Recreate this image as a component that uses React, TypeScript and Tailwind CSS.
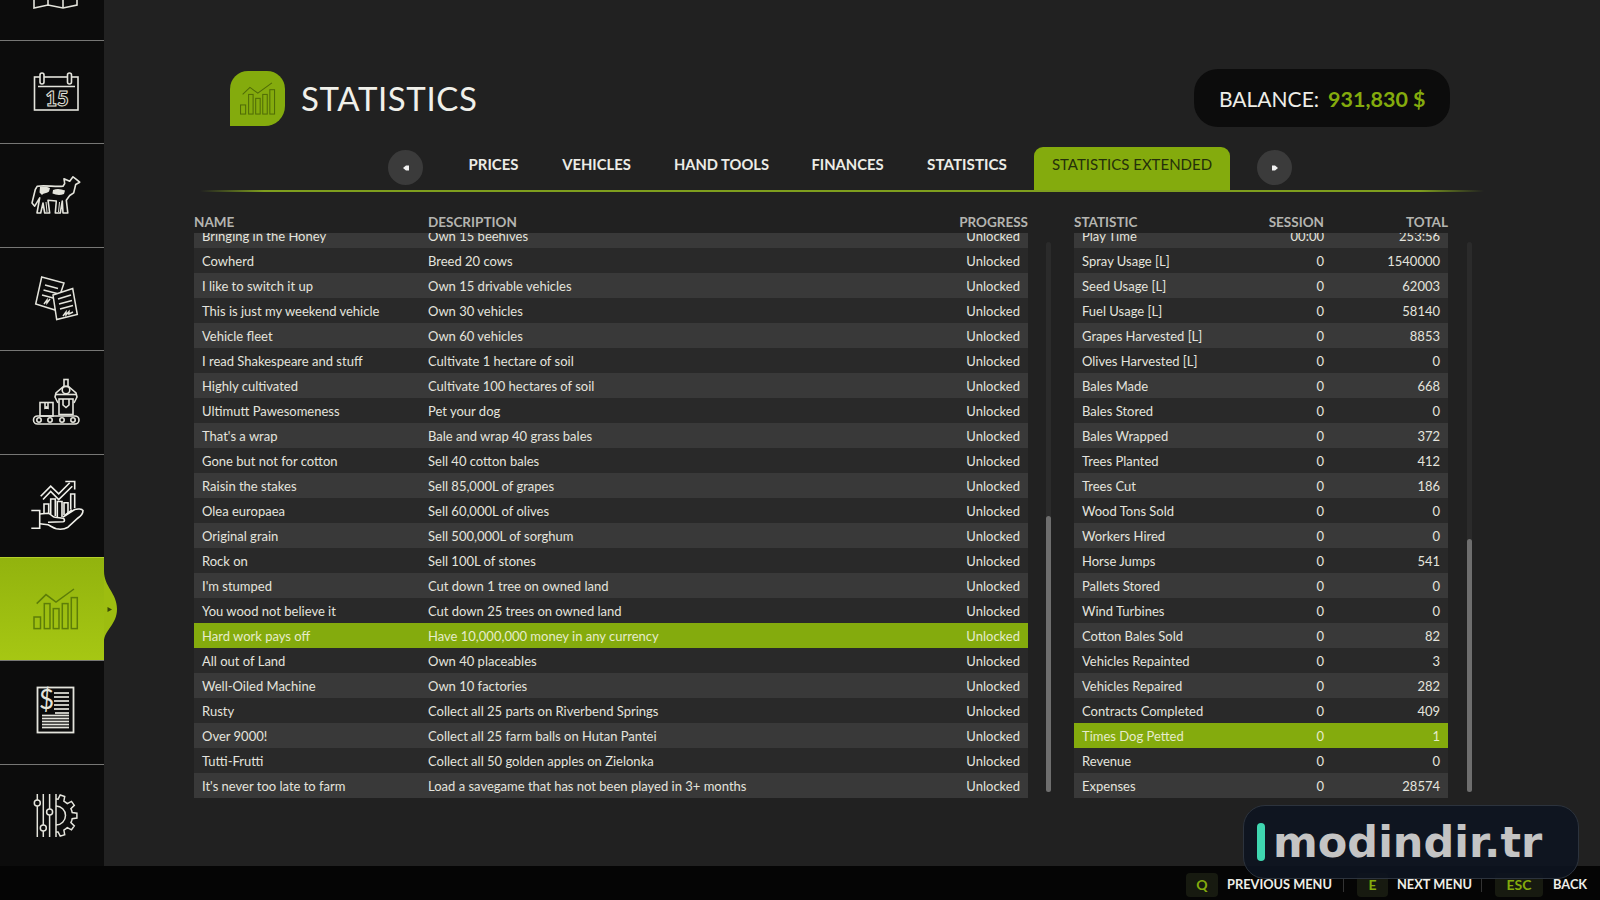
import React from 'react';

const font = { fontFamily: '"Lato", "Open Sans", sans-serif' };

const achievements = [
  ['Bringing in the Honey', 'Own 15 beehives'],
  ['Cowherd', 'Breed 20 cows'],
  ['I like to switch it up', 'Own 15 drivable vehicles'],
  ['This is just my weekend vehicle', 'Own 30 vehicles'],
  ['Vehicle fleet', 'Own 60 vehicles'],
  ['I read Shakespeare and stuff', 'Cultivate 1 hectare of soil'],
  ['Highly cultivated', 'Cultivate 100 hectares of soil'],
  ['Ultimutt Pawesomeness', 'Pet your dog'],
  ["That's a wrap", 'Bale and wrap 40 grass bales'],
  ['Gone but not for cotton', 'Sell 40 cotton bales'],
  ['Raisin the stakes', 'Sell 85,000L of grapes'],
  ['Olea europaea', 'Sell 60,000L of olives'],
  ['Original grain', 'Sell 500,000L of sorghum'],
  ['Rock on', 'Sell 100L of stones'],
  ["I'm stumped", 'Cut down 1 tree on owned land'],
  ['You wood not believe it', 'Cut down 25 trees on owned land'],
  ['Hard work pays off', 'Have 10,000,000 money in any currency'],
  ['All out of Land', 'Own 40 placeables'],
  ['Well-Oiled Machine', 'Own 10 factories'],
  ['Rusty', 'Collect all 25 parts on Riverbend Springs'],
  ['Over 9000!', 'Collect all 25 farm balls on Hutan Pantei'],
  ['Tutti-Frutti', 'Collect all 50 golden apples on Zielonka'],
  ["It's never too late to farm", 'Load a savegame that has not been played in 3+ months'],
];

const stats = [
  ['Play Time', '00:00', '253:56'],
  ['Spray Usage [L]', '0', '1540000'],
  ['Seed Usage [L]', '0', '62003'],
  ['Fuel Usage [L]', '0', '58140'],
  ['Grapes Harvested [L]', '0', '8853'],
  ['Olives Harvested [L]', '0', '0'],
  ['Bales Made', '0', '668'],
  ['Bales Stored', '0', '0'],
  ['Bales Wrapped', '0', '372'],
  ['Trees Planted', '0', '412'],
  ['Trees Cut', '0', '186'],
  ['Wood Tons Sold', '0', '0'],
  ['Workers Hired', '0', '0'],
  ['Horse Jumps', '0', '541'],
  ['Pallets Stored', '0', '0'],
  ['Wind Turbines', '0', '0'],
  ['Cotton Bales Sold', '0', '82'],
  ['Vehicles Repainted', '0', '3'],
  ['Vehicles Repaired', '0', '282'],
  ['Contracts Completed', '0', '409'],
  ['Times Dog Petted', '0', '1'],
  ['Revenue', '0', '0'],
  ['Expenses', '0', '28574'],
];

const ink = '#e4e4dc';

const gearPoints = () => {
  const pts: string[] = [];
  const teeth = 5;
  for (let i = 0; i < teeth; i++) {
    const step = 180 / teeth;
    const a0 = -90 + i * step;
    [[0.0, 16.5], [0.2, 16.5], [0.32, 21], [0.68, 21], [0.8, 16.5], [1.0, 16.5]].forEach(([f, r]) => {
      const a = ((a0 + f * step) * Math.PI) / 180;
      pts.push(`${(56 + r * Math.cos(a)).toFixed(1)},${(51.6 + r * Math.sin(a)).toFixed(1)}`);
    });
  }
  return pts.join(' ');
};

const ChartBars = ({ color, width }: { color: string; width: number }) => (
  <g fill="none" stroke={color} strokeWidth={width}>
    <rect x="34" y="60" width="6.5" height="11.6" />
    <rect x="44.3" y="46.6" width="5.7" height="25" />
    <rect x="53.3" y="51.6" width="5.7" height="20" />
    <rect x="62.3" y="46.6" width="5.7" height="25" />
    <rect x="71.3" y="40.6" width="6" height="31" />
    <polyline points="36.7,46.6 46,37.6 56,45 74,32" />
  </g>
);

const CalendarIcon = () => (
  <g fill="none" stroke={ink} strokeWidth="1.6">
    <rect x="34.5" y="37" width="43.5" height="33" />
    <line x1="38" y1="46.5" x2="75" y2="46.5" />
    <rect x="40" y="33" width="4" height="11" rx="2" fill="#0c0c0c" />
    <rect x="67.5" y="33" width="4" height="11" rx="2" fill="#0c0c0c" />
    <text x="57" y="66" textAnchor="middle" fontSize="20" fontWeight="900" fill="none" strokeWidth="1" style={font}>15</text>
  </g>
);

const CowIcon = () => (
  <g stroke={ink} strokeWidth="1.6" strokeLinejoin="round">
    <path fill="#0c0c0c" d="M37.3 43.2 C45 42 55 44 63 43.2 L64.7 40.5 L64 35.8 L69.7 38.2 L73 33.8 L75.7 35.8 L79.7 39.2 L75.7 41.5 L73.7 49.8 L69.7 52.5 L66.3 57.2 L67.8 70 L63 70 L62.3 58 L60.3 70 L55.3 70 L56.3 58 L48 57.2 L49.7 70 L44.7 70 L43 60 L40.7 70 L37 70 L39.7 54.8 L34.7 63.2 L32 60 L35.3 46.5 Z" />
    <path fill={ink} stroke="none" d="M40 44 C44 43.2 47.5 43.8 50 45 L49 48.5 C46 51 44 49.5 42 52 L39.5 49.5 Z" />
    <path fill={ink} stroke="none" d="M53 47 C57 45.5 61 46 65 47.5 L64 51 C60 52.5 56 52 52.5 50.5 Z" />
    <line x1="59.5" y1="59" x2="58.5" y2="69" strokeWidth="1" />
    <line x1="46" y1="59" x2="47" y2="69" strokeWidth="1" />
  </g>
);

const DocsIcon = () => (
  <g fill="#0c0c0c" stroke={ink} strokeWidth="1.5">
    <polygon points="41.7,30 64,36 55,63 35.7,57" />
    <line x1="45" y1="38" x2="58" y2="41.5" />
    <line x1="43.5" y1="43" x2="57" y2="46.5" />
    <line x1="42" y1="48" x2="55" y2="51.5" />
    <polygon points="53,48 72.7,41.5 77.3,67.5 56.7,72.6" />
    <line x1="58" y1="52" x2="71" y2="48" />
    <line x1="59" y1="57" x2="72" y2="53.5" />
    <line x1="60" y1="62" x2="73" y2="58.5" />
    <path fill="none" d="M63 69 L66 65 L66 68 L69 64.5 L69 67 L73 65" />
    <path fill="none" d="M44 57 L47 53 L47 56 L50 52" />
  </g>
);

const FactoryIcon = () => (
  <g fill="none" stroke={ink} strokeWidth="1.6">
    <rect x="33.5" y="66" width="45.5" height="8" rx="4" />
    {[39, 50, 62, 73].map(x => <circle key={x} cx={x} cy="70" r="2.2" />)}
    <rect x="40" y="52.5" width="13" height="13.5" />
    <polyline points="45,52.5 45,58 46.5,57 48,58 48,52.5" />
    <rect x="59" y="49" width="14" height="15.5" />
    <path d="M63 49 L63 55 L66 57.5 L69 55 L69 49" />
    <rect x="64" y="29.5" width="4" height="7" />
    <circle cx="66" cy="40" r="3.8" />
    <polyline points="64,36 56,43 55,47 58,53" />
    <polyline points="68,36 76,43 77,47 74,53" />
    <line x1="56" y1="44.5" x2="76" y2="44.5" />
  </g>
);

const HandIcon = () => (
  <g fill="none" stroke="#f0f0ea" strokeWidth="1.6" strokeLinejoin="miter">
    <polyline points="31.3,56.5 39.7,56.5 39.7,74.2 31.3,74.2" />
    <polyline points="40.7,42.2 50.7,32.2 58.7,39.8 69.7,28.8" />
    <polyline points="43,45.5 50.7,37.5 58.7,45.5 72.3,32.2" />
    <polyline points="65.3,27.5 74.7,27.5 74.7,35.5" />
    <polyline points="44,59 44,50 48.7,50 48.7,59.5" />
    <polyline points="50.7,60.5 50.7,45 55.3,45 55.3,62" />
    <polyline points="57.3,63 57.3,47.5 62,47.5 62,63" />
    <polyline points="64,61 64,48.8 68,48.8 68,59" />
    <polyline points="70.7,55.5 70.7,40 74.7,40 74.7,54" />
    <path d="M39.7 60 L48 59.2 C51 59.5 52 63.2 55 63.2 L63 64.2 C65 65 65 67.5 63 67.7 L48 68.2" />
    <path d="M63 63 L74.7 55.5 C78 54.5 82 55 83 56.5 C83 59 81 62 78 64 L68 73.2 C64 75.5 60 75.5 56.3 74.8 C53 74 50 71.5 48 70.8 L39.7 69.8" />
    <line x1="65.3" y1="60.8" x2="72" y2="56" />
  </g>
);

const ReportIcon = () => (
  <g stroke={ink} fill="none">
    <rect x="37.5" y="27.5" width="36" height="45" strokeWidth="1.8" />
    <text x="46.5" y="49" textAnchor="middle" fontSize="26" fill={ink} stroke="none" style={font}>$</text>
    {[33, 37, 41, 45, 49, 53].map(y => <line key={y} x1={y === 53 ? 55 : 54} y1={y} x2="69" y2={y} strokeWidth="1.7" />)}
    {[55.5, 58.5, 61.5, 64.5, 67.5].map(y => <line key={y} x1="42" y1={y} x2="69" y2={y} strokeWidth="1.7" />)}
  </g>
);

const SlidersIcon = () => (
  <g fill="none" stroke={ink} strokeWidth="1.5">
    <line x1="37.3" y1="30" x2="37.3" y2="73" />
    <line x1="43.3" y1="30" x2="43.3" y2="73" />
    <line x1="49.6" y1="30" x2="49.6" y2="73" />
    <circle cx="37.3" cy="39" r="3" fill="#0c0c0c" />
    <circle cx="43.3" cy="64" r="3" fill="#0c0c0c" />
    <circle cx="49.6" cy="48" r="3" fill="#0c0c0c" />
    <polyline points={gearPoints()} />
    <line x1="56" y1="30" x2="56" y2="73" />
    <path d="M56 42 A9.5 9.5 0 0 1 56 61" />
  </g>
);

const NavRow = ({ children, active }: { children: React.ReactNode; active?: boolean }) => (
  <div className={active
    ? 'relative h-[103.4px] bg-gradient-to-b from-[#92b30e] to-[#a6c713] border-t border-[#b5d02a]'
    : 'h-[103.4px] border-t border-[#777775]'}>
    <svg className="block w-[104px] h-[103px] -mt-px" viewBox="0 0 104 103">{children}</svg>
    {active && (
      <svg className="absolute left-[104px] top-0 w-[14px] h-[103px]" viewBox="0 0 14 103">
        <path d="M0 13 C0 29 13 35 13 51 C13 67 0 72 0 84 Z" fill="#9dbd10" />
        <path d="M3.5 49 L8 51.5 L3.5 54 Z" fill="#3a4a06" />
      </svg>
    )}
  </div>
);

const Sidebar = () => (
  <div className="w-[104px] h-[866px] shrink-0 bg-[#0c0c0c] relative">
    <div className="h-[40px] overflow-hidden">
      <svg className="block w-[104px] h-[40px]" viewBox="0 0 104 40">
        <polyline points="34,-3 34,8 48,5 63,8 77,5 77,-3" fill="none" stroke={ink} strokeWidth="1.6" />
        <line x1="48" y1="-3" x2="48" y2="5" stroke={ink} strokeWidth="1.6" />
        <line x1="63" y1="-3" x2="63" y2="8" stroke={ink} strokeWidth="1.6" />
      </svg>
    </div>
    <NavRow><CalendarIcon /></NavRow>
    <NavRow><CowIcon /></NavRow>
    <NavRow><DocsIcon /></NavRow>
    <NavRow><FactoryIcon /></NavRow>
    <NavRow><HandIcon /></NavRow>
    <NavRow active><ChartBars color="#5d7d08" width={1.5} /></NavRow>
    <NavRow><ReportIcon /></NavRow>
    <NavRow><SlidersIcon /></NavRow>
  </div>
);

const ArrowButton = ({ dir }: { dir: 'left' | 'right' }) => (
  <button className="w-[35px] h-[35px] mt-[3px] shrink-0 rounded-full bg-[#3b3b3b] flex items-center justify-center">
    <svg width="6" height="6" viewBox="0 0 6 6">
      <path d={dir === 'left' ? 'M0 3 L3 0.5 L6 0.5 L6 5.5 L3 5.5 Z' : 'M6 3 L3 0.5 L0 0.5 L0 5.5 L3 5.5 Z'} fill="#f2f2f2" />
    </svg>
  </button>
);

const Tabs = () => (
  <div className="flex items-start h-[43px] mt-[20px] pl-[284px]">
    <ArrowButton dir="left" />
    <span className="ml-[45px] w-[51px] h-[43px] leading-[35px] text-[14.9px] font-bold whitespace-nowrap text-[#ecece6] flex justify-center">PRICES</span>
    <span className="ml-[43px] w-[69px] h-[43px] leading-[35px] text-[14.8px] font-bold whitespace-nowrap text-[#ecece6] flex justify-center">VEHICLES</span>
    <span className="ml-[43px] w-[95px] h-[43px] leading-[35px] text-[14.7px] font-bold whitespace-nowrap text-[#ecece6] flex justify-center">HAND TOOLS</span>
    <span className="ml-[43px] w-[71px] h-[43px] leading-[35px] text-[14.8px] font-bold whitespace-nowrap text-[#ecece6] flex justify-center">FINANCES</span>
    <span className="ml-[43px] w-[82px] h-[43px] leading-[35px] text-[15.2px] font-bold whitespace-nowrap text-[#ecece6] flex justify-center">STATISTICS</span>
    <span className="ml-[26px] w-[196px] h-[43px] leading-[35px] text-[15px] whitespace-nowrap text-[#24300a] bg-[#84ab0d] rounded-t-[9px] flex justify-center">STATISTICS EXTENDED</span>
    <div className="ml-[27px]"><ArrowButton dir="right" /></div>
  </div>
);

const rowTone = (i: number, hi: number) =>
  i === hi ? 'bg-[#84ab0d] text-[#e6ecca]' : i % 2 === 0 ? 'bg-[#393939]' : 'bg-[#292929]';

const Scrollbar = ({ thumb }: { thumb: string }) => (
  <div className="w-[5px] h-[550px] mt-[9px] rounded-full bg-[#2b2b2b] shrink-0">
    <div className={`${thumb} w-[5px] rounded-full bg-[#6e6e6e]`} />
  </div>
);

const App: React.FC = () => {
  return (
    <div className="relative w-[1600px] h-[900px] overflow-hidden bg-[#212121] text-[#e4e4de]" style={font}>
      <div className="flex h-[866px]">
        <Sidebar />
        <div className="flex-1 min-w-0">
          <div className="flex items-center justify-between h-[58px] mt-[69px] pl-[126px] pr-[150px]">
            <div className="flex items-center">
              <div className="w-[55px] h-[55px] bg-[#84ab0d] rounded-tl-[18px] rounded-tr-[18px] rounded-br-[20px] overflow-hidden">
                <svg className="block w-[55px] h-[55px]" viewBox="20.6 16.8 70 70">
                  <ChartBars color="#4f6b07" width={1.3} />
                </svg>
              </div>
              <h1 className="ml-[16px] text-[33px] leading-none tracking-[0.6px] text-[#f0f0ea]">STATISTICS</h1>
            </div>
            <div className="w-[256px] h-[58px] rounded-[24px] bg-[#0c0c0c] flex items-center pl-[25px] pt-[2px]">
              <span className="w-[101px] text-[21px] whitespace-nowrap text-[#eeeee8]">BALANCE:</span>
              <span className="ml-[8px] text-[21.5px] font-bold whitespace-nowrap text-[#84ab0d]">931,830 $</span>
            </div>
          </div>

          <Tabs />
          <div className="ml-[96px] w-[1284px] h-[2px] bg-[linear-gradient(90deg,transparent,#7f9f1e_5%,#7f9f1e_95%,transparent)]" />

          <div className="flex pl-[90px] mt-[20px]">
            <div className="w-[834px] shrink-0">
              <div className="flex h-[21px] text-[13.5px] font-bold text-[#b4b4b0] leading-[20px]">
                <span className="w-[234px]">NAME</span>
                <span className="flex-1">DESCRIPTION</span>
                <span>PROGRESS</span>
              </div>
              <div className="h-[565px] overflow-hidden">
                <div className="-mt-[10px]">
                  {achievements.map((row, i) => (
                    <div key={row[0]} className={`flex h-[25px] items-center pl-[8px] pr-[8px] pt-[2px] text-[13px] ${rowTone(i, 16)}`}>
                      <span className="w-[226px] whitespace-nowrap">{row[0]}</span>
                      <span className="flex-1 whitespace-nowrap">{row[1]}</span>
                      <span>Unlocked</span>
                    </div>
                  ))}
                </div>
              </div>
            </div>
            <div className="w-[45px] shrink-0 flex justify-center pt-[21px] -ml-[2px]">
              <Scrollbar thumb="mt-[274px] h-[276px]" />
            </div>
            <div className="w-[374px] shrink-0 ml-[3px]">
              <div className="flex h-[21px] text-[13.5px] font-bold text-[#b4b4b0] leading-[20px]">
                <span className="flex-1">STATISTIC</span>
                <span className="w-[100px] text-right">SESSION</span>
                <span className="w-[124px] text-right">TOTAL</span>
              </div>
              <div className="h-[565px] overflow-hidden">
                <div className="-mt-[10px]">
                  {stats.map((row, i) => (
                    <div key={row[0]} className={`flex h-[25px] items-center pl-[8px] pr-[8px] pt-[2px] text-[13px] ${rowTone(i, 20)}`}>
                      <span className="flex-1 whitespace-nowrap">{row[0]}</span>
                      <span className="w-[100px] text-right">{row[1]}</span>
                      <span className="w-[116px] text-right">{row[2]}</span>
                    </div>
                  ))}
                </div>
              </div>
            </div>
            <div className="w-[5px] ml-[19px] shrink-0 flex pt-[21px]">
              <Scrollbar thumb="mt-[297px] h-[253px]" />
            </div>
          </div>
        </div>
      </div>

      <div className="h-[34px] bg-[#050505] flex items-center justify-end pr-[12px] pt-[3px] text-[12.8px] font-bold text-[#eeeee8]">
        <span className="w-[32px] h-[24px] rounded-[4px] bg-[#171a10] text-[#84ab0d] text-[14px] flex items-center justify-center">Q</span>
        <span className="ml-[9px] w-[105px] whitespace-nowrap">PREVIOUS MENU</span>
        <span className="ml-[11px] w-px h-[14px] bg-[#333]" />
        <span className="ml-[13px] w-[31px] h-[24px] rounded-[4px] bg-[#171a10] text-[#84ab0d] text-[14px] flex items-center justify-center">E</span>
        <span className="ml-[9px] w-[73px] whitespace-nowrap">NEXT MENU</span>
        <span className="ml-[11px] w-px h-[14px] bg-[#333]" />
        <span className="ml-[13px] w-[48px] h-[24px] rounded-[4px] bg-[#171a10] text-[#84ab0d] text-[14px] flex items-center justify-center">ESC</span>
        <span className="ml-[10px] w-[35px] whitespace-nowrap">BACK</span>
      </div>

      {/* watermark over the footer */}
      <div className="absolute left-[1243px] top-[805px] w-[336px] h-[74px] rounded-[22px] border border-[#2c333d] bg-[#0d1420]/90 flex items-center pl-[13px]">
        <span className="w-[8px] h-[38px] rounded-full bg-[#3fd6b0]" />
        <span className="ml-[8px] text-[43px] leading-none font-bold text-[#c4c4c4] whitespace-nowrap" style={{ fontFamily: '"DejaVu Sans", sans-serif' }}>modindir.tr</span>
      </div>
    </div>
  );
};

export default App;
